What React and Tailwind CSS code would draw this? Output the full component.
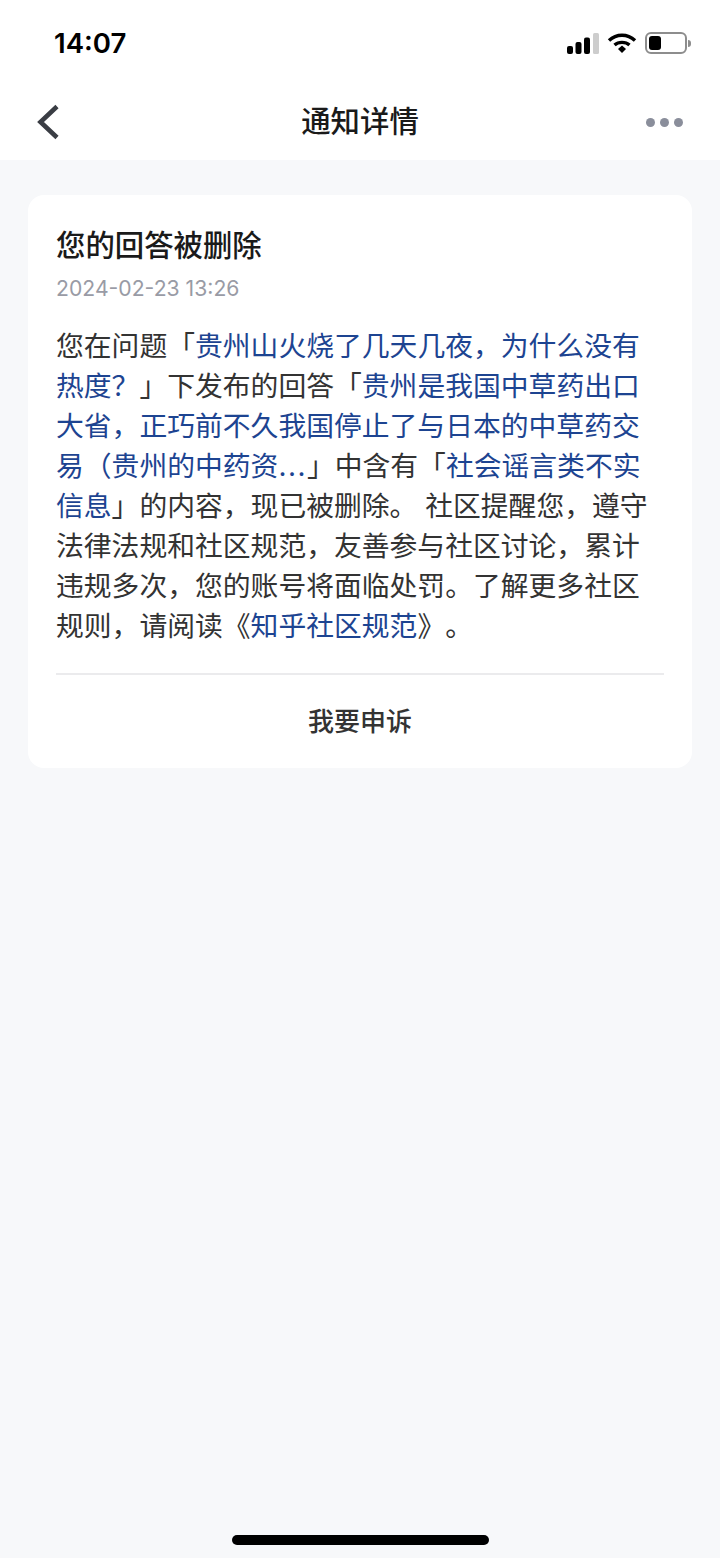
const Link = ({ children }) => <span className="text-[#1d4491]">{children}</span>;

function StatusIcons() {
  return (
    <div className="flex items-center">
      <svg width="34" height="21" viewBox="0 0 34 21" className="mr-[7px]">
        <rect x="1" y="13" width="6" height="8" rx="2" fill="#000" />
        <rect x="9.5" y="9" width="6" height="12" rx="2" fill="#000" />
        <rect x="18" y="4.5" width="6" height="16.5" rx="2" fill="#000" />
        <rect x="27" y="0" width="6" height="21" rx="1.5" fill="#cdcdcd" />
      </svg>
      <svg width="30" height="22" viewBox="0 0 30 22" className="mr-[8px]">
        <path d="M2 8.5 C9.5 1.5 20.5 1.5 28 8.5" fill="none" stroke="#000" strokeWidth="3.4" />
        <path d="M7.5 13 C11.5 9.5 18.5 9.5 22.5 13" fill="none" stroke="#000" strokeWidth="3.4" />
        <path d="M11 17 L15 13.6 L19 17 L15 21 Z" fill="#000" />
      </svg>
      <div className="flex items-center">
        <div className="w-[42px] h-[22px] rounded-[6px] border-2 border-[#8d8d8d] p-[2px] bg-white">
          <div className="w-[12px] h-full rounded-[3px] bg-black" />
        </div>
        <div className="ml-[1px] w-[3px] h-[7px] rounded-r-full bg-[#8d8d8d]" />
      </div>
    </div>
  );
}

export default function App() {
  return (
    <div className="relative h-[1558px] bg-[#f7f8fa] font-['Inter','Noto_Sans_CJK_SC',sans-serif]">
      <div className="bg-white h-[160px]">
        <div className="h-[86px] pl-[54px] pr-[29px] flex items-center justify-between">
          <span className="mt-[2px] text-[27.6px] font-semibold leading-none text-black">14:07</span>
          <StatusIcons />
        </div>
        <div className="h-[74px] pl-[36px] pr-[37px] pb-[2px] flex items-center justify-between">
          <svg width="24" height="36" viewBox="0 0 24 36">
            <path d="M21 2.5 L4.5 18 L21 33.5" fill="none" stroke="#3a3d44" strokeWidth="4.6" />
          </svg>
          <h1 className="ml-[3px] text-[29.4px] leading-none font-medium text-[#1a1a1a]">通知详情</h1>
          <div className="flex gap-[5px] ml-[-11px]">
            <span className="w-[9px] h-[9px] rounded-full bg-[#8a8e9b]" />
            <span className="w-[9px] h-[9px] rounded-full bg-[#8a8e9b]" />
            <span className="w-[9px] h-[9px] rounded-full bg-[#8a8e9b]" />
          </div>
        </div>
      </div>

      <div className="mx-[28px] mt-[35px] bg-white rounded-[16px] px-[28px] h-[573px]">
        <h2 className="pt-[33px] text-[29.4px] leading-[36px] font-medium text-[#1a1a1a]">您的回答被删除</h2>
        <p className="mt-[10px] text-[21.2px] leading-[28px] text-[#999ba5]">2024-02-23 13:26</p>
        <p className="mt-[24px] text-[27.8px] leading-[40px] text-[#333333] [text-spacing-trim:space-all]">
          您在问题「<Link>贵州山火烧了几天几夜，为什么没有热度？</Link>」下发布的回答「<Link>贵州是我国中草药出口大省，正巧前不久我国停止了与日本的中草药交易（贵州的中药资<span className="tracking-[1.5px]">...</span></Link>」中含有「<Link>社会谣言类不实信息</Link>」的内容，现已被删除。 社区提醒您，遵守法律法规和社区规范，友善参与社区讨论，累计违规多次，您的账号将面临处罚。了解更多社区规则，请阅读《<Link>知乎社区规范</Link>》。
        </p>
        <div className="mt-[27px] border-t-2 border-[#ebebed] h-[94px] flex items-center justify-center">
          <span className="text-[26px] font-medium text-[#333333]">我要申诉</span>
        </div>
      </div>

      <div className="absolute bottom-[13px] left-[232px] w-[257px] h-[10px] rounded-full bg-black" />
    </div>
  );
}
